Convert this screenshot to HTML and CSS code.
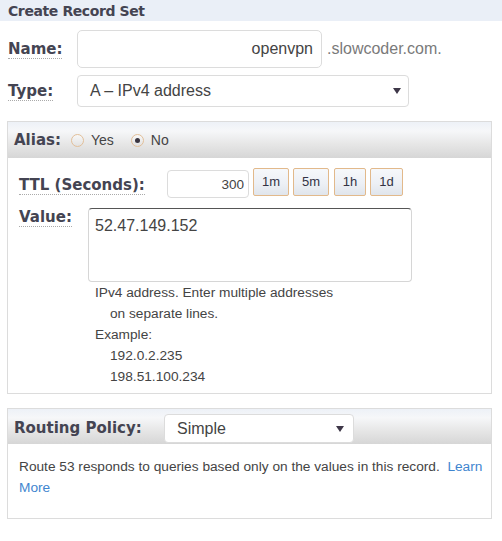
FILE: index.html
```html
<!DOCTYPE html>
<html>
<head>
<meta charset="utf-8">
<link rel="stylesheet" href="styles.css">
</head>
<body>
<div class="title">Create Record Set</div>

<div class="row row-name">
  <span class="label"><span class="hint">Name:</span></span>
  <input class="field name-field" type="text" value="openvpn">
  <span class="suffix">.slowcoder.com.</span>
</div>

<div class="row row-type">
  <span class="label"><span class="hint">Type:</span></span>
  <div class="select type-select"><span>A – IPv4 address</span><i class="caret"></i></div>
</div>

<section class="panel alias-panel">
  <div class="panel-head">
    <span class="head-label">Alias:</span>
    <span class="radio radio-yes"><span class="dot"></span>Yes</span>
    <span class="radio radio-no checked"><span class="dot"></span>No</span>
  </div>
  <div class="alias-body">
    <div class="ttl-row">
      <span class="ttl-label"><span class="hint">TTL (Seconds):</span></span>
      <input class="field ttl-field" type="text" value="300">
      <div class="btns">
        <button class="btn b-1m">1m</button>
        <button class="btn b-5m">5m</button>
        <button class="btn b-1h">1h</button>
        <button class="btn b-1d">1d</button>
      </div>
    </div>
    <div class="value-row">
      <span class="value-label"><span class="hint">Value:</span></span>
      <div class="value-col">
        <textarea class="value-field">52.47.149.152</textarea>
        <div class="help">
          <div class="line">IPv4 address. Enter multiple addresses</div>
          <div class="line indent">on separate lines.</div>
          <div class="line">Example:</div>
          <div class="line indent">192.0.2.235</div>
          <div class="line indent">198.51.100.234</div>
        </div>
      </div>
    </div>
  </div>
</section>

<section class="panel routing-panel">
  <div class="panel-head routing-head">
    <span class="head-label routing-label">Routing Policy:</span>
    <div class="select routing-select"><span>Simple</span><i class="caret"></i></div>
  </div>
  <div class="routing-body"><span>Route 53 responds to queries based only on the values in this record.</span>&nbsp; <a class="link" href="#">Learn</a> <a class="link" href="#">More</a></div>
</section>
</body>
</html>
```

FILE: styles.css
```css
* { box-sizing: border-box; }

body {
  margin: 0;
  background: #fff;
  font-family: "Liberation Sans", Arial, sans-serif;
  color: #444;
}

.title {
  height: 21px;
  padding: 1px 0 0 8px;
  background: #eaeff7;
  font-family: "DejaVu Sans", Verdana, sans-serif;
  font-weight: bold;
  font-size: 14px;
  letter-spacing: -0.4px;
  line-height: 20px;
  color: #444452;
}

.row {
  display: flex;
  align-items: center;
  padding-left: 8px;
}

.row-name { margin-top: 9px; height: 38px; }
.row-type { margin-top: 7px; height: 32px; }

.label {
  width: 69px;
  flex: none;
  font-family: "DejaVu Sans", Verdana, sans-serif;
  font-weight: bold;
  font-size: 15px;
  color: #444452;
}

.hint {
  border-bottom: 1px dotted #aaa;
}

.field {
  font-family: "Liberation Sans", Arial, sans-serif;
  color: #444;
  background: #fff;
  border: 1px solid #dcdcdc;
  outline: none;
  margin: 0;
}

.name-field {
  width: 245px;
  height: 38px;
  border-radius: 5px;
  font-size: 16px;
  text-align: right;
  padding: 0 8px 0 6px;
}

.suffix {
  margin-left: 5px;
  font-size: 16px;
  color: #7a7a7a;
}

.select {
  position: relative;
  display: flex;
  align-items: center;
  background: #fff;
  border: 1px solid #dcdcdc;
  border-radius: 4px;
  font-size: 16px;
  color: #444;
  padding-left: 12px;
}

.type-select { width: 332px; height: 32px; }

.caret {
  position: absolute;
  top: 50%;
  margin-top: -3px;
  width: 0;
  height: 0;
  border-left: 4px solid transparent;
  border-right: 4px solid transparent;
  border-top: 6px solid #3e3748;
}

.type-select .caret { right: 7px; }
.routing-select .caret { right: 9px; }

.panel {
  margin: 14px 10px 0 7px;
  border: 1px solid #dcdcdc;
}

.panel-head {
  display: flex;
  align-items: center;
  height: 36px;
  padding-left: 6px;
  background: linear-gradient(180deg, #edf1f7 0%, #f6f7f9 25%, #e7e7e7 60%, #d6d6d6 100%);
}

.head-label {
  font-family: "DejaVu Sans", Verdana, sans-serif;
  font-weight: bold;
  font-size: 15px;
  color: #444452;
}

.radio {
  display: flex;
  align-items: center;
  font-size: 14px;
  color: #444;
}

.radio-yes { margin-left: 10px; }
.radio-no { margin-left: 17px; }

.dot {
  position: relative;
  width: 13px;
  height: 13px;
  margin-right: 7px;
  border-radius: 50%;
  border: 1px solid #e2bf99;
  background: linear-gradient(180deg, #f8f8f8, #e2e2e2);
}

.radio.checked .dot::after {
  content: "";
  position: absolute;
  left: 3px;
  top: 3px;
  width: 5px;
  height: 5px;
  border-radius: 50%;
  background: #3a3540;
}

.alias-body {
  padding: 10px 8px 6px 11px;
}

.ttl-row {
  display: flex;
  align-items: flex-start;
  height: 30px;
}

.ttl-label {
  width: 148px;
  flex: none;
  margin-top: 8px;
  font-family: "DejaVu Sans", Verdana, sans-serif;
  font-weight: bold;
  font-size: 15px;
  color: #444452;
}

.ttl-field {
  width: 82px;
  height: 28px;
  margin-top: 2px;
  border-radius: 4px;
  font-size: 13.5px;
  text-align: right;
  padding: 0 4px 0 4px;
}

.btns {
  display: flex;
  gap: 4px;
  margin-left: 4px;
}

.btn {
  height: 28px;
  padding: 0 0 2px;
  border: 1px solid #e2b98b;
  border-radius: 2px;
  background: linear-gradient(180deg, #f6f8fb 0%, #edf0f5 55%, #e0e5ec 100%);
  font-family: "Liberation Sans", Arial, sans-serif;
  font-size: 13px;
  color: #333344;
}

.b-1m, .b-5m { width: 36px; }
.b-1h { width: 32px; margin-left: 1px; }
.b-1d { width: 33px; }

.value-row {
  display: flex;
  align-items: flex-start;
  margin-top: 10px;
}

.value-label {
  width: 69px;
  flex: none;
  font-family: "DejaVu Sans", Verdana, sans-serif;
  font-weight: bold;
  font-size: 15px;
  color: #444452;
}

.value-field {
  display: block;
  width: 324px;
  height: 74px;
  margin: 0;
  padding: 8px 6px;
  resize: none;
  border: 1px solid #d6d6d6;
  border-top-color: #555;
  border-radius: 4px;
  outline: none;
  font-family: "Liberation Sans", Arial, sans-serif;
  font-size: 16px;
  color: #444;
}

.help {
  padding-left: 7px;
  font-size: 13.7px;
  line-height: 21px;
  color: #444;
}

.help .indent { padding-left: 15px; }

.routing-panel { margin-top: 14px; }

.routing-head {
  height: 35px;
  align-items: flex-start;
}

.routing-label {
  width: 150px;
  flex: none;
  margin-top: 10px;
}

.routing-select {
  width: 190px;
  height: 29px;
  margin-top: 5px;
}

.routing-body {
  padding: 12px 8px 20px 11px;
  font-size: 13.7px;
  line-height: 21px;
  color: #444;
}

.link {
  color: #3f85cf;
  text-decoration: none;
}
```
